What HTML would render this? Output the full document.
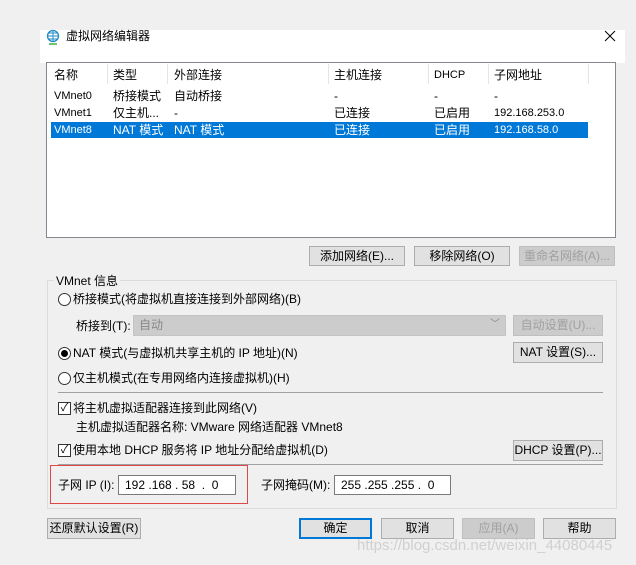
<html><head><style>
body{margin:0;width:636px;height:565px;background:#f0f0f0;font-family:"Liberation Sans","Noto Sans CJK SC",sans-serif;font-size:12px;line-height:16px;color:#000;position:relative;overflow:hidden}
.a{position:absolute;white-space:nowrap}
.btn{position:absolute;background:#e1e1e1;border:1px solid #adadad;box-sizing:border-box;text-align:center;line-height:18px}
.dis{color:#a0a0a0;background:#ccc;border-color:#bfbfbf}
.rad{position:absolute;width:11px;height:11px;border:1px solid #333;border-radius:50%;background:#fff}
.chk{position:absolute;width:11px;height:11px;border:1px solid #333;background:#fff;font-size:11px;line-height:11px;text-align:center}
.inp{position:absolute;background:#fff;border:1px solid #7a7a7a;box-sizing:border-box;line-height:18px;padding-left:6px}
.sep{position:absolute;height:1px;background:#a0a0a0;left:58px;width:545px}
.hs{position:absolute;top:64px;width:1px;height:20px;background:#e5e5e5}
</style></head><body>
<div class="a" style="left:40px;top:30px;width:585px;height:33px;background:#fff"></div>
<svg class="a" style="left:46px;top:29px" width="14" height="16" viewBox="0 0 14 16"><circle cx="7" cy="7" r="5.5" fill="none" stroke="#1e8bc3" stroke-width="1.3"/><path d="M1.5 7h11M7 1.5v11M3 4h8M3 10h8" stroke="#1e8bc3" stroke-width="0.9" fill="none"/><path d="M3 15h8" stroke="#4a4" stroke-width="1.5"/></svg>
<div class="a" style="left:66px;top:28px">虚拟网络编辑器</div>
<svg class="a" style="left:604px;top:30px" width="12" height="12" viewBox="0 0 12 12"><path d="M1 1L11 11M11 1L1 11" stroke="#000" stroke-width="1"/></svg>
<div class="a" style="left:46px;top:62px;width:570px;height:176px;background:#fff;border:1px solid #828790;box-sizing:border-box"></div>
<div class="hs" style="left:107px"></div><div class="hs" style="left:167px"></div><div class="hs" style="left:328px"></div><div class="hs" style="left:428px"></div><div class="hs" style="left:488px"></div><div class="hs" style="left:588px"></div>
<div class="a" style="left:51px;top:122px;width:537px;height:16px;background:#0078d7"></div>
<div class="a" style="top:67px;left:54px">名称</div><div class="a" style="top:67px;left:113px">类型</div><div class="a" style="top:67px;left:174px">外部连接</div><div class="a" style="top:67px;left:334px">主机连接</div><div class="a" style="top:67px;left:434px;font-size:11px">DHCP</div><div class="a" style="top:67px;left:494px">子网地址</div>
<div class="a" style="top:88px;left:54px;font-size:11px">VMnet0</div><div class="a" style="top:88px;left:113px">桥接模式</div><div class="a" style="top:88px;left:174px">自动桥接</div><div class="a" style="top:88px;left:334px">-</div><div class="a" style="top:88px;left:434px">-</div><div class="a" style="top:88px;left:494px">-</div>
<div class="a" style="top:105px;left:54px;font-size:11px">VMnet1</div><div class="a" style="top:105px;left:113px">仅主机...</div><div class="a" style="top:105px;left:174px">-</div><div class="a" style="top:105px;left:334px">已连接</div><div class="a" style="top:105px;left:434px">已启用</div><div class="a" style="top:105px;left:494px;font-size:11px">192.168.253.0</div>
<div style="color:#fff"><div class="a" style="top:122px;left:54px;font-size:11px">VMnet8</div><div class="a" style="top:122px;left:113px">NAT 模式</div><div class="a" style="top:122px;left:174px">NAT 模式</div><div class="a" style="top:122px;left:334px">已连接</div><div class="a" style="top:122px;left:434px">已启用</div><div class="a" style="top:122px;left:494px;font-size:11px">192.168.58.0</div></div>
<div class="btn" style="left:309px;top:246px;width:96px;height:20px">添加网络(E)...</div>
<div class="btn" style="left:414px;top:246px;width:96px;height:20px">移除网络(O)</div>
<div class="btn dis" style="left:519px;top:246px;width:96px;height:20px">重命名网络(A)...</div>
<div class="a" style="left:47px;top:280px;width:570px;height:229px;border:1px solid #dcdcdc;box-sizing:border-box"></div>
<div class="a" style="left:54px;top:273px;background:#f0f0f0;padding:0 2px">VMnet 信息</div>
<div class="rad" style="left:58px;top:293px"></div><div class="a" style="left:73px;top:291px">桥接模式(将虚拟机直接连接到外部网络)(B)</div>
<div class="a" style="left:76px;top:318px">桥接到(T):</div>
<div class="a" style="left:133px;top:315px;width:373px;height:21px;background:#ccc;border:1px solid #c4c4c4;box-sizing:border-box;color:#888;padding-left:5px;line-height:19px">自动<span style="position:absolute;right:5px;top:-1px;font-size:10px">﹀</span></div>
<div class="btn dis" style="left:513px;top:315px;width:90px;height:21px">自动设置(U)...</div>
<div class="rad" style="left:58px;top:347px"></div><div class="a" style="left:61px;top:350px;width:7px;height:7px;border-radius:50%;background:#000"></div>
<div class="a" style="left:73px;top:345px">NAT 模式(与虚拟机共享主机的 IP 地址)(N)</div>
<div class="btn" style="left:513px;top:342px;width:90px;height:21px">NAT 设置(S)...</div>
<div class="rad" style="left:58px;top:372px"></div><div class="a" style="left:73px;top:370px">仅主机模式(在专用网络内连接虚拟机)(H)</div>
<div class="sep" style="top:392px"></div>
<div class="chk" style="left:58px;top:402px">✓</div><div class="a" style="left:73px;top:400px">将主机虚拟适配器连接到此网络(V)</div>
<div class="a" style="left:76px;top:419px">主机虚拟适配器名称: VMware 网络适配器 VMnet8</div>
<div class="chk" style="left:58px;top:444px">✓</div><div class="a" style="left:73px;top:442px">使用本地 DHCP 服务将 IP 地址分配给虚拟机(D)</div>
<div class="btn" style="left:513px;top:440px;width:90px;height:21px">DHCP 设置(P)...</div>
<div class="sep" style="top:464px"></div>
<div class="a" style="left:50px;top:465px;width:198px;height:39px;border:1px solid #e04848;box-sizing:border-box"></div>
<div class="a" style="left:58px;top:477px">子网 IP (I):</div>
<div class="inp" style="left:118px;top:475px;width:118px;height:20px">192 .168 . 58 &nbsp;. &nbsp;0</div>
<div class="a" style="left:261px;top:477px">子网掩码(M):</div>
<div class="inp" style="left:334px;top:475px;width:117px;height:20px">255 .255 .255 . &nbsp;0</div>
<div class="btn" style="left:47px;top:518px;width:94px;height:21px">还原默认设置(R)</div>
<div class="btn" style="left:299px;top:518px;width:73px;height:21px;border:2px solid #0078d7;line-height:17px">确定</div>
<div class="btn" style="left:381px;top:518px;width:73px;height:21px">取消</div>
<div class="btn dis" style="left:462px;top:518px;width:73px;height:21px">应用(A)</div>
<div class="btn" style="left:543px;top:518px;width:73px;height:21px">帮助</div>
<div class="a" style="left:357px;top:538px;font-size:15px;color:rgba(200,200,200,0.8)">https://blog.csdn.net/weixin_44080445</div>
</body></html>
